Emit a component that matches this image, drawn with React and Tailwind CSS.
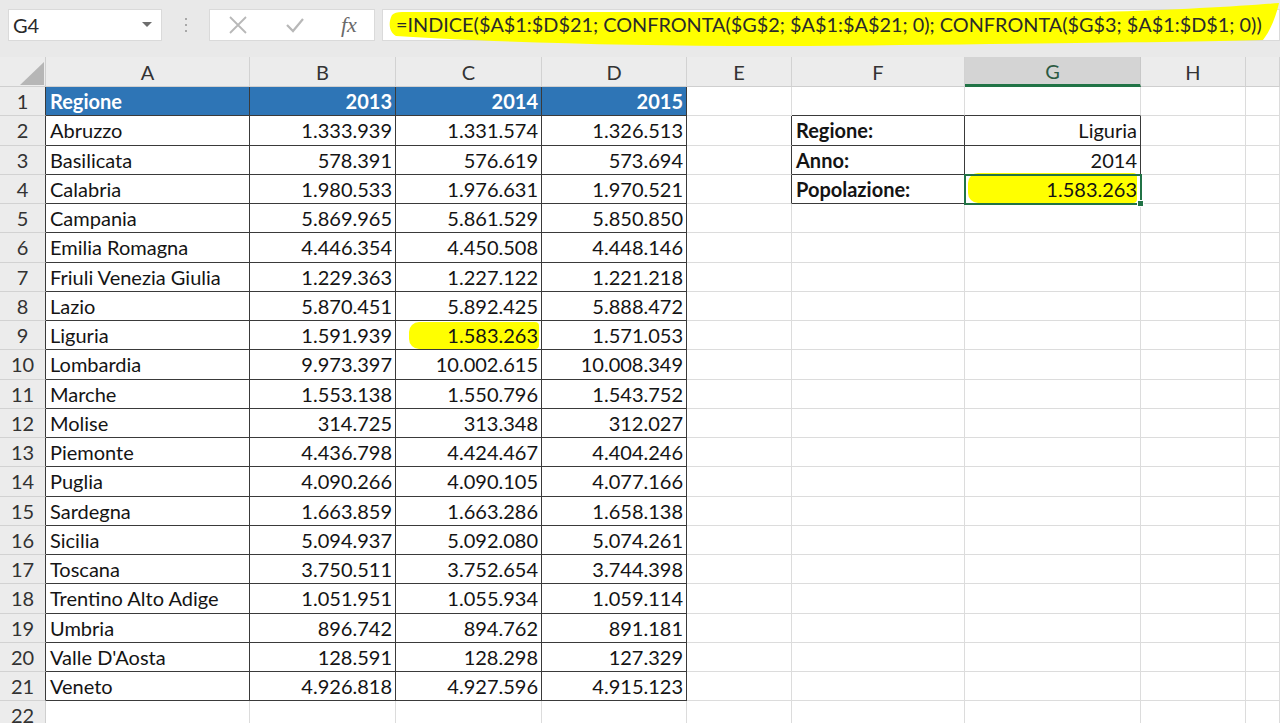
import React from 'react';

const DATA = [
  ['Abruzzo', '1.333.939', '1.331.574', '1.326.513'],
  ['Basilicata', '578.391', '576.619', '573.694'],
  ['Calabria', '1.980.533', '1.976.631', '1.970.521'],
  ['Campania', '5.869.965', '5.861.529', '5.850.850'],
  ['Emilia Romagna', '4.446.354', '4.450.508', '4.448.146'],
  ['Friuli Venezia Giulia', '1.229.363', '1.227.122', '1.221.218'],
  ['Lazio', '5.870.451', '5.892.425', '5.888.472'],
  ['Liguria', '1.591.939', '1.583.263', '1.571.053'],
  ['Lombardia', '9.973.397', '10.002.615', '10.008.349'],
  ['Marche', '1.553.138', '1.550.796', '1.543.752'],
  ['Molise', '314.725', '313.348', '312.027'],
  ['Piemonte', '4.436.798', '4.424.467', '4.404.246'],
  ['Puglia', '4.090.266', '4.090.105', '4.077.166'],
  ['Sardegna', '1.663.859', '1.663.286', '1.658.138'],
  ['Sicilia', '5.094.937', '5.092.080', '5.074.261'],
  ['Toscana', '3.750.511', '3.752.654', '3.744.398'],
  ['Trentino Alto Adige', '1.051.951', '1.055.934', '1.059.114'],
  ['Umbria', '896.742', '894.762', '891.181'],
  ["Valle D'Aosta", '128.591', '128.298', '127.329'],
  ['Veneto', '4.926.818', '4.927.596', '4.915.123'],
];

const COLS = ['A', 'B', 'C', 'D', 'E', 'F', 'G', 'H', ''];
const WIDTHS = ['w-[204px]', 'w-[146px]', 'w-[146px]', 'w-[145px]', 'w-[105px]', 'w-[173px]', 'w-[176px]', 'w-[105px]', 'flex-1'];

const FORMULA = '=INDICE($A$1:$D$21; CONFRONTA($G$2; $A$1:$A$21; 0); CONFRONTA($G$3; $A$1:$D$1; 0))';

// cells that belong to one of the two bordered tables
function inTable(r, c) {
  return (r >= 1 && r <= 21 && c >= 0 && c <= 3) || (r >= 2 && r <= 4 && c >= 5 && c <= 6);
}

function cellContent(r, c) {
  if (r === 1 && c <= 3) {
    return { text: c === 0 ? 'Regione' : String(2012 + c), right: c > 0, bold: true, blue: true };
  }
  if (r >= 2 && r <= 21 && c <= 3) {
    return { text: DATA[r - 2][c], right: c > 0 };
  }
  if (c === 5 && r >= 2 && r <= 4) {
    return { text: ['Regione:', 'Anno:', 'Popolazione:'][r - 2], bold: true };
  }
  if (c === 6 && r >= 2 && r <= 4) {
    return { text: ['Liguria', '2014', '1.583.263'][r - 2], right: true };
  }
  return { text: '' };
}

function Cell({ r, c }) {
  const cell = cellContent(r, c);
  const darkRight = inTable(r, c) || inTable(r, c + 1);
  const darkBottom = inTable(r, c) || inTable(r + 1, c);
  const isC9 = r === 9 && c === 2;
  const isG4 = r === 4 && c === 6;

  return (
    <div
      className={
        'relative h-[29.25px] shrink-0 flex items-center border-r border-b text-[20px] ' +
        WIDTHS[c] + ' ' +
        (isG4 ? 'z-10 ' : '') +
        (darkRight ? 'border-r-[#3a3a3a] ' : 'border-r-[#dcdcdc] ') +
        (darkBottom ? 'border-b-[#3a3a3a] ' : 'border-b-[#dcdcdc] ') +
        (cell.blue ? 'bg-[#2e75b6] text-white ' : 'bg-white text-[#141414] ') +
        (cell.right ? 'justify-end pr-[3px] ' : 'justify-start pl-[4px] ') +
        (cell.bold ? 'font-bold' : '')
      }
    >
      {isC9 && <div className="absolute left-[13px] right-[2px] top-[1px] bottom-[0px] bg-[#ffff00] rounded-l-[10px] rounded-r-[4px]" />}
      {isG4 && <div className="absolute left-[3px] right-[3px] top-[-2px] bottom-[0px] bg-[#ffff00] rounded-l-[10px] rounded-r-[4px]" />}
      <span className="relative whitespace-nowrap">{cell.text}</span>
      {isG4 && (
        <div className="absolute left-[-1px] right-[-2px] top-[-1px] bottom-[-2px] border-2 border-[#217346] pointer-events-none">
          <div className="absolute right-[-4px] bottom-[-4px] w-[7px] h-[7px] bg-[#217346] border border-white" />
        </div>
      )}
    </div>
  );
}

function Toolbar() {
  return (
    <div className="h-[57px] bg-[#e9e9e9] flex items-start pt-[9px] pl-[8px] font-[Lato,sans-serif]">
      <div className="w-[154px] h-[32px] bg-white border border-[#dadada] flex items-center justify-between pl-[4px] pr-[9px]">
        <span className="text-[20px] text-[#2a2a2a]">G4</span>
        <svg width="10" height="6" viewBox="0 0 10 6"><path d="M0 0 L10 0 L5 5 Z" fill="#6d6d6d" /></svg>
      </div>
      <div className="w-[47px] h-[32px] flex flex-col items-center justify-center gap-[4px]">
        <div className="w-[2px] h-[2px] bg-[#a8a8a8]" />
        <div className="w-[2px] h-[2px] bg-[#a8a8a8]" />
        <div className="w-[2px] h-[2px] bg-[#a8a8a8]" />
      </div>
      <div className="w-[166px] h-[32px] bg-white border border-[#dadada] flex items-center">
        <svg className="ml-[18px]" width="20" height="20" viewBox="0 0 20 20">
          <path d="M2 2 L18 18 M18 2 L2 18" stroke="#b8b8b8" strokeWidth="1.8" />
        </svg>
        <svg className="ml-[37px]" width="20" height="20" viewBox="0 0 20 20">
          <path d="M2 10 L8 16 L18 4" stroke="#b8b8b8" strokeWidth="2.2" fill="none" />
        </svg>
        <span className="ml-[36px] text-[22px] italic text-[#6a6a6a] font-[Liberation_Serif,serif] leading-none">fx</span>
      </div>
      <div className="relative ml-[7px] flex-1 h-[32px] bg-white border border-[#dadada] flex items-center">
        <svg className="absolute left-0 top-0 overflow-visible pointer-events-none" width="1" height="1">
          <path
            transform="translate(-383 -9)"
            d="M392 14 C388 22 389 31 396 35 C520 43 720 47 900 44 C1060 42 1200 41 1263 39 C1270 30 1276 16 1279 2 C1240 5 1180 9 1100 11 L402 11 C397 11 394 12 392 14 Z"
            fill="#ffff00"
          />
        </svg>
        <span className="relative pl-[13px] text-[19.85px] text-[#2a2a2a] whitespace-nowrap">{FORMULA}</span>
      </div>
    </div>
  );
}

function ColumnHeaders() {
  return (
    <div className="flex h-[30px] font-[Lato,sans-serif]">
      <div className="w-[46px] shrink-0 bg-[#ececec] border-r border-b border-[#cfcfcf] relative">
        <svg className="absolute left-[20px] top-[5px]" width="24" height="23" viewBox="0 0 24 23">
          <path d="M24 0 L24 23 L0 23 Z" fill="#b6b6b6" />
        </svg>
      </div>
      {COLS.map((col, i) => (
        <div
          key={i}
          className={
            'shrink-0 flex items-center justify-center text-[20px] border-r ' +
            WIDTHS[i] + ' ' +
            (col === 'G'
              ? 'bg-[#d4d4d4] text-[#2c5a42] border-r-[#c8c8c8] border-b-[3px] border-b-[#217346]'
              : 'bg-[#ececec] text-[#333] border-r-[#d2d2d2] border-b border-b-[#cfcfcf]')
          }
        >
          {col}
        </div>
      ))}
    </div>
  );
}

export default function App() {
  const rowNums = Array.from({ length: 22 }, (_, i) => i + 1);
  return (
    <div className="w-[1280px] h-[723px] overflow-hidden bg-white font-[Lato,sans-serif]">
      <Toolbar />
      <ColumnHeaders />
      {rowNums.map((r) => (
        <div key={r} className={'flex ' + (r === 4 ? 'relative z-10' : '')}>
          <div
            className={
              'w-[46px] h-[29.25px] shrink-0 bg-[#ececec] flex items-center justify-center text-[20px] text-[#333] border-r border-b border-b-[#d2d2d2] ' +
              (r <= 21 ? 'border-r-[#3a3a3a]' : 'border-r-[#cfcfcf]')
            }
          >
            {r}
          </div>
          {COLS.map((_, c) => (
            <Cell key={c} r={r} c={c} />
          ))}
        </div>
      ))}
    </div>
  );
}
